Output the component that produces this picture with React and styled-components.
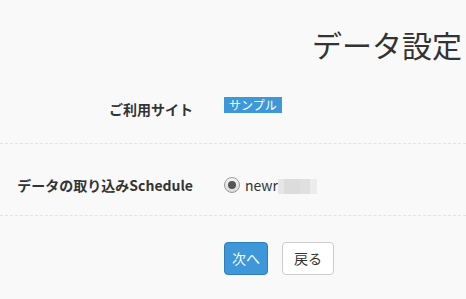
import React from "react";
import styled, { createGlobalStyle } from "styled-components";

const GlobalStyle = createGlobalStyle`
    html, body {
        margin: 0;
        padding: 0;
        background: #f9f9f9;
    }
    body {
        font-family: "Noto Sans CJK JP", "Noto Sans", sans-serif;
        color: #333;
        overflow: hidden;
    }
`;

const Page = styled.div`
    width: 466px;
    height: 299px;
`;

const Title = styled.h1`
    margin: 0;
    height: 80px;
    padding: 24px 4px 0 0;
    box-sizing: border-box;
    text-align: right;
    font-size: 30px;
    font-weight: 400;
    line-height: 40px;
    color: #333;
    white-space: nowrap;
`;

const Row = styled.div`
    display: grid;
    grid-template-columns: 193px 1fr;
    column-gap: 31px;
    align-items: center;
    padding: ${({ $pad }) => $pad};
    border-bottom: 1px dashed #e3e3e3;
`;

const Label = styled.div`
    text-align: right;
    font-size: 14px;
    font-weight: 700;
    line-height: 20px;
    color: #333;
    white-space: nowrap;
    margin-top: ${({ $shift }) => $shift || 0}px;
`;

const Value = styled.div`
    display: flex;
    align-items: center;
    height: 20px;
    font-size: 14px;
`;

const Badge = styled.span`
    display: inline-block;
    height: 16px;
    padding: 0 5px;
    margin-top: -6px;
    background: #3d97d8;
    color: #fff;
    font-size: 12px;
    font-weight: 400;
    line-height: 16px;
`;

const Radio = styled.span`
    position: relative;
    width: 14px;
    height: 14px;
    border-radius: 50%;
    border: 1px solid #9a9a9a;
    background: linear-gradient(#f4f4f4, #dcdcdc);
    box-sizing: content-box;
    margin-right: 5px;
    &::after {
        content: "";
        position: absolute;
        left: 3px;
        top: 3px;
        width: 8px;
        height: 8px;
        border-radius: 50%;
        background: #555;
    }
`;

const RadioText = styled.span`
    font-size: 14px;
    color: #333;
    line-height: 20px;
`;

const Blur = styled.span`
    display: inline-flex;
    height: 15px;
    margin-top: 2px;
    span {
        display: block;
        height: 100%;
    }
`;

const Actions = styled.div`
    display: flex;
    gap: 14px;
    padding: 26px 0 0 224px;
`;

const Button = styled.button`
    height: 33px;
    padding: 0 ${({ $px }) => $px}px;
    border-radius: 4px;
    font-family: "Noto Sans CJK JP", "Noto Sans", sans-serif;
    font-size: 14px;
    line-height: 31px;
    cursor: pointer;
    border: 1px solid ${({ $primary }) => ($primary ? "#2f7fbd" : "#cccccc")};
    background: ${({ $primary }) => ($primary ? "#3d97d8" : "#ffffff")};
    color: ${({ $primary }) => ($primary ? "#ffffff" : "#333333")};
`;

const App = () => {
    return (
        <Page>
            <GlobalStyle />
            <Title>データ設定</Title>
            <Row $pad="17px 0 24px">
                <Label $shift={2}>ご利用サイト</Label>
                <Value>
                    <Badge>サンプル</Badge>
                </Value>
            </Row>
            <Row $pad="31px 0 20px">
                <Label>データの取り込みSchedule</Label>
                <Value>
                    <Radio />
                    <RadioText>newr</RadioText>
                    <Blur>
                        <span style={{ width: 6, background: "#e6e6e6" }} />
                        <span style={{ width: 16, background: "#dcdcdc" }} />
                        <span style={{ width: 10, background: "#e0e0e0" }} />
                        <span style={{ width: 7, background: "#ececec" }} />
                    </Blur>
                </Value>
            </Row>
            <Actions>
                <Button $primary $px={7}>次へ</Button>
                <Button $px={11}>戻る</Button>
            </Actions>
        </Page>
    );
};

export default App;
